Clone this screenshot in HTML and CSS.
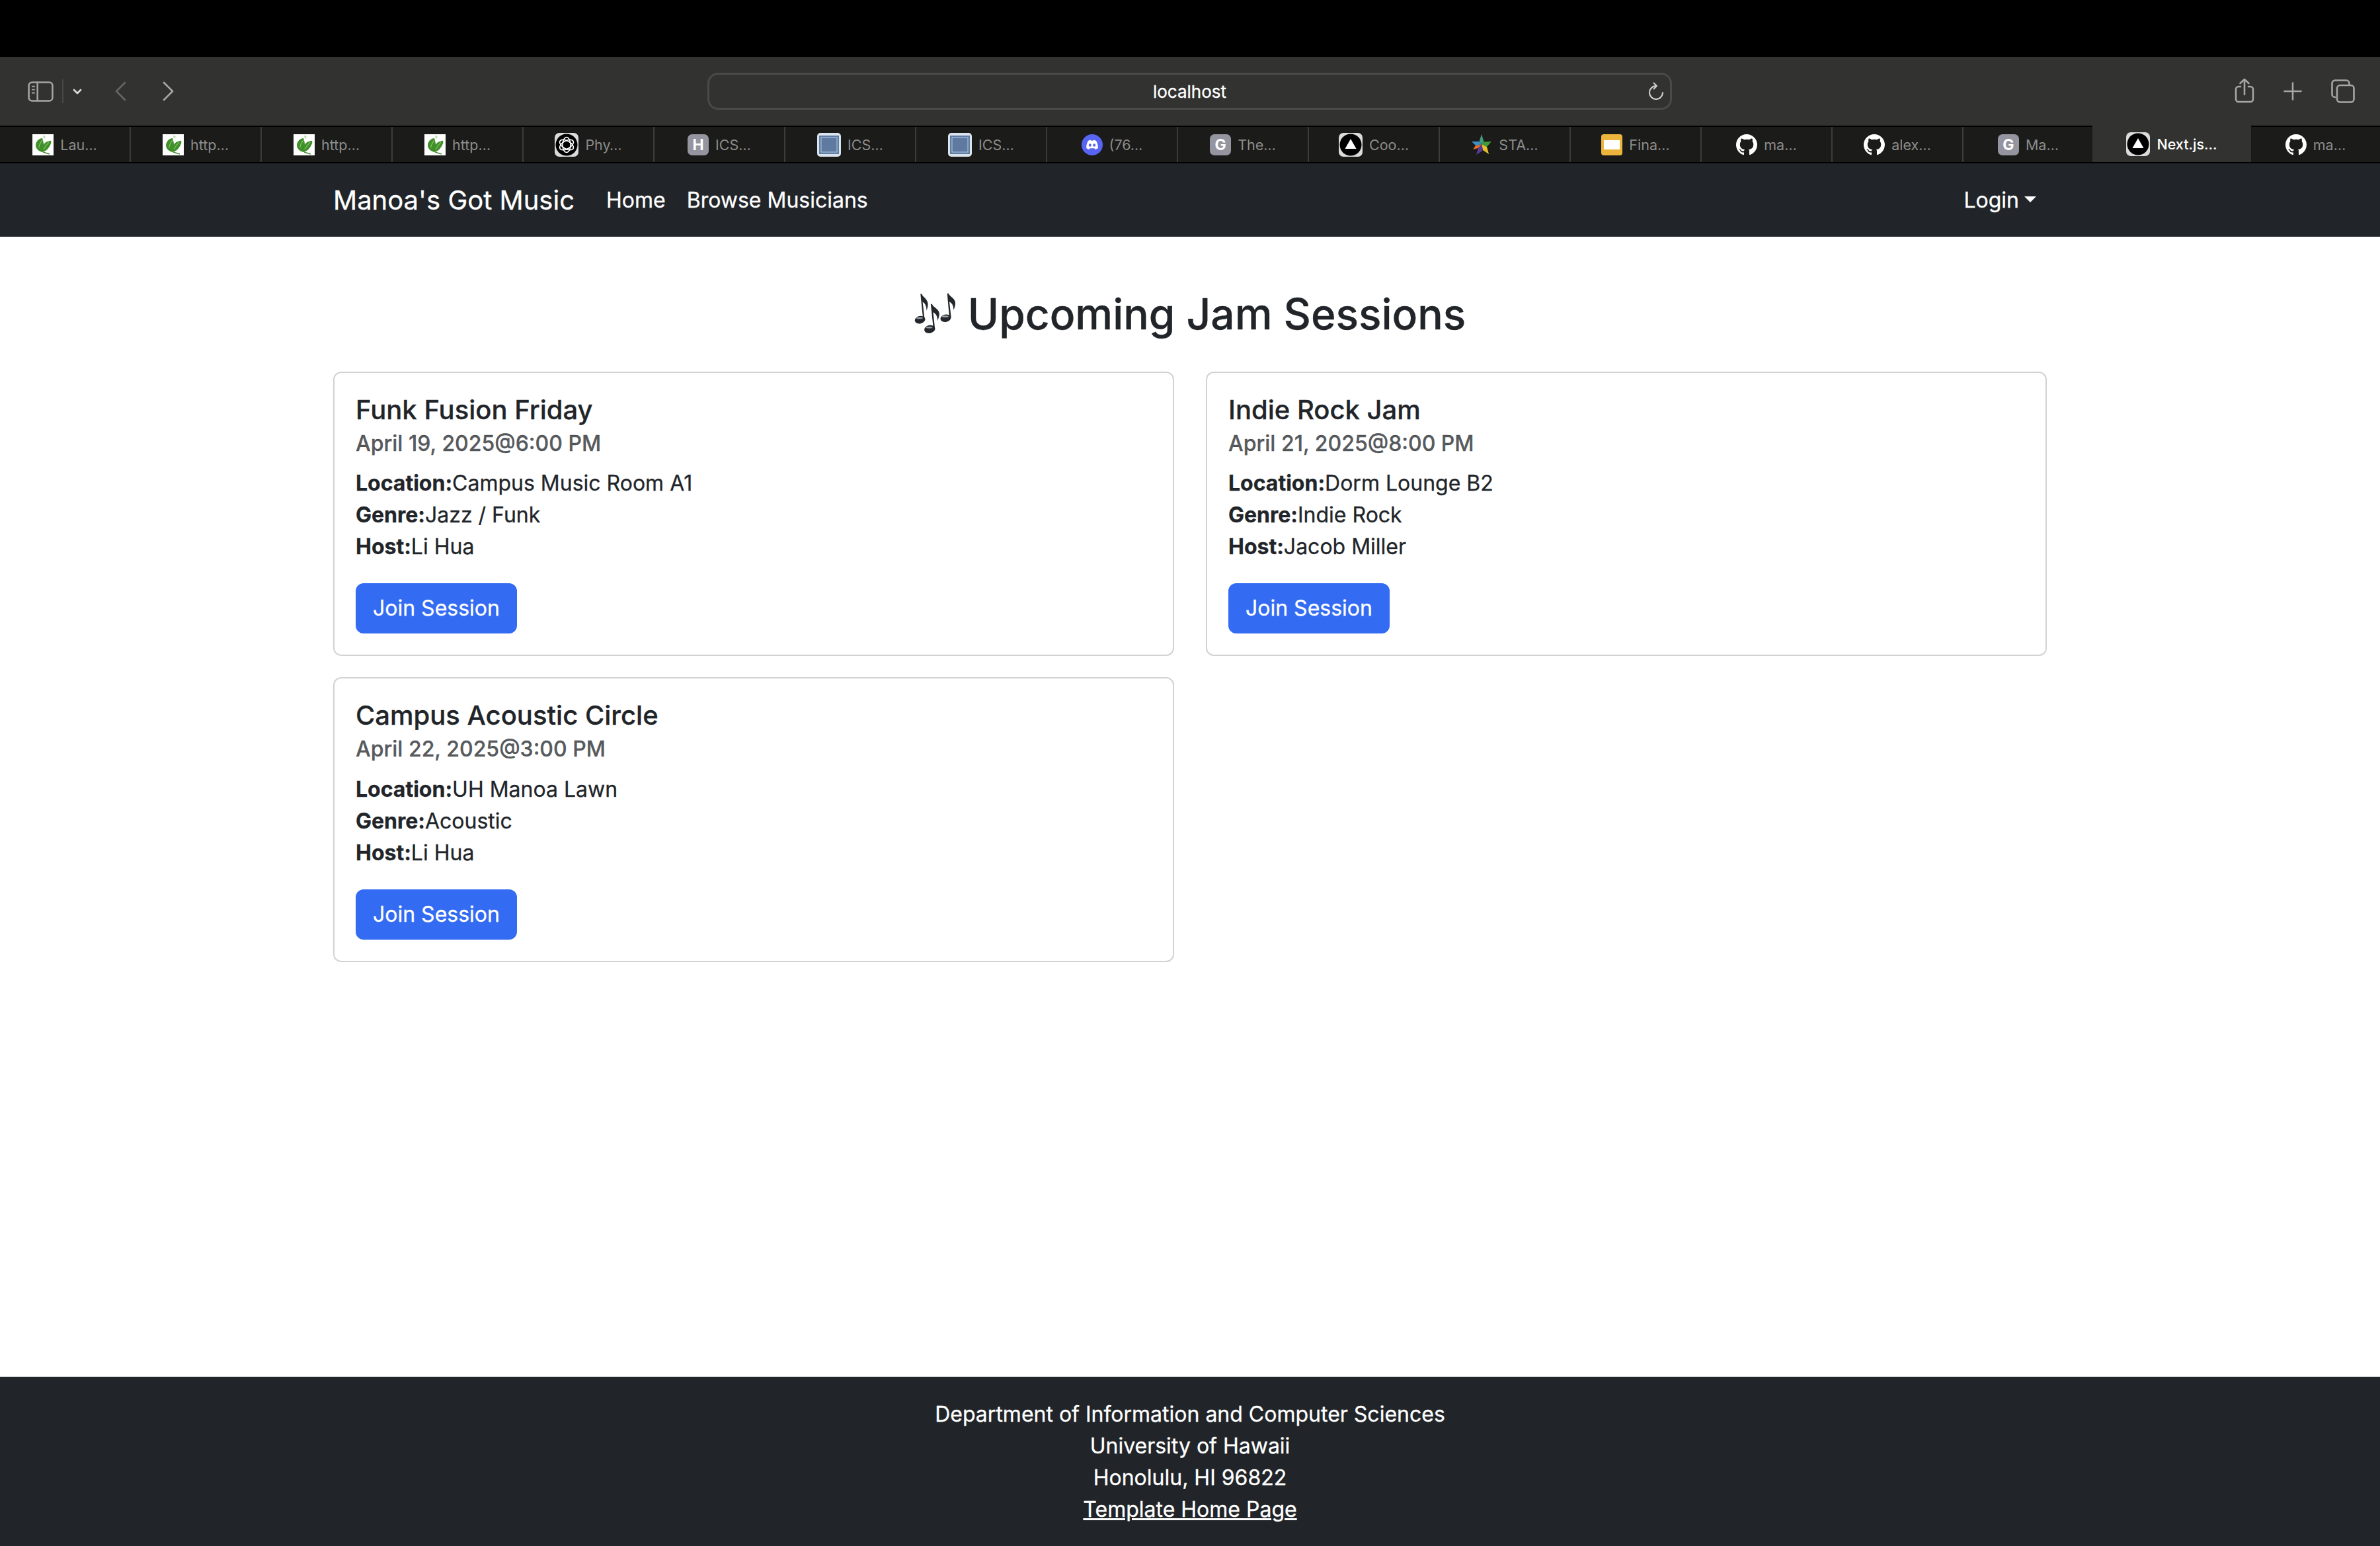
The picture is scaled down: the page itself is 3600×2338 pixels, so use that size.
FILE: index.html
```html
<!DOCTYPE html>
<html lang="en">
<head>
  <meta charset="UTF-8">
  <title>Manoa's Got Music</title>
  <link rel="stylesheet" href="styles.css">
</head>
<body>
  <svg class="sprites" width="0" height="0">
    <symbol id="leaf" viewBox="0 0 32 32">
      <rect width="32" height="32" fill="#fff"/>
      <path d="M17 1l3 3-2 3-2-3z" fill="#bfe0b4"/>
      <path d="M15 6C10 6 5 11 5 17c0 5 5 9 10 10 5-1 10-5 13-13 1-3 0-5-2-4-4 1-8 3-9 6 0-4-1-7-2-10z" fill="#3f8f2a"/>
      <path d="M15 9c-2 3-5 6-5 11M25 12c-3 3-6 7-8 11" fill="none" stroke="#7dbb5f" stroke-width="1.500"/>
      <path d="M16 27l10 3" fill="none" stroke="#4d8a3a" stroke-width="1.500"/>
    </symbol>
    <symbol id="openai" viewBox="0 0 36 36">
      <rect width="36" height="36" rx="7" fill="#dcdcdc"/>
      <circle cx="18" cy="18" r="16.500" fill="#000"/>
      <g fill="none" stroke="#fff" stroke-width="1.600">
        <ellipse cx="18" cy="18" rx="6" ry="11.500"/>
        <ellipse cx="18" cy="18" rx="6" ry="11.500" transform="rotate(60 18 18)"/>
        <ellipse cx="18" cy="18" rx="6" ry="11.500" transform="rotate(120 18 18)"/>
      </g>
    </symbol>
    <symbol id="page" viewBox="0 0 36 36">
      <rect width="36" height="36" rx="5" fill="#dbe3ec"/>
      <rect x="3" y="4" width="30" height="28" fill="#5f7ea6"/>
      <rect x="6" y="7" width="24" height="22" fill="#5e7aa0" stroke="#b9c8da" stroke-width="1"/>
    </symbol>
    <symbol id="discord" viewBox="0 0 32 32">
      <circle cx="16" cy="16" r="16" fill="#5865f2"/>
      <path d="M10 10c2-1 3.500-1.200 4-1.200l.5 1h3l.5-1c.5 0 2 .2 4 1.200 2 3 3 7 2.800 11-1.500 1.200-3 1.800-4.300 2l-1-1.700h-7l-1 1.700c-1.300-.2-2.800-.8-4.300-2-.2-4 .8-8 2.800-11z" fill="#fff"/>
      <ellipse cx="12.800" cy="16.500" rx="2" ry="2.300" fill="#5865f2"/>
      <ellipse cx="19.200" cy="16.500" rx="2" ry="2.300" fill="#5865f2"/>
    </symbol>
    <symbol id="vercel" viewBox="0 0 36 36">
      <rect width="36" height="36" rx="7" fill="#dcdcdc"/>
      <circle cx="18" cy="18" r="16.500" fill="#000"/>
      <path d="M18 9l8.500 15h-17z" fill="#fff"/>
    </symbol>
    <symbol id="star" viewBox="0 0 32 32">
      <path d="M16 0l3.500 11-3.500 4-3.500-4z" fill="#3f9c7b"/>
      <path d="M16 15l3.500-4 1 .5L31 11l-7 8z" fill="#3f9a3a"/>
      <path d="M16 15l8 4 3 11-9-6z" fill="#e6c12e"/>
      <path d="M16 15l2 9-2 2-8 5 3-10z" fill="#5b3a94"/>
      <path d="M16 15l-5 6-8 2 4-6z" fill="#e2702a"/>
      <path d="M16 15l-9 2-6-6h11z" fill="#3d8fc9"/>
    </symbol>
    <symbol id="slides" viewBox="0 0 32 32">
      <rect width="32" height="32" rx="4" fill="#ecb53c"/>
      <rect x="4" y="9" width="24" height="14" fill="#fff"/>
    </symbol>
    <symbol id="github" viewBox="0 0 16 16">
      <path fill="#fff" d="M8 0C3.580 0 0 3.580 0 8c0 3.540 2.290 6.530 5.470 7.590.4.070.55-.17.55-.38 0-.19-.01-.82-.01-1.490-2.010.37-2.530-.49-2.690-.94-.09-.23-.48-.94-.82-1.130-.28-.15-.68-.52-.01-.53.63-.01 1.080.58 1.230.82.72 1.210 1.870.87 2.330.66.07-.52.28-.87.51-1.070-1.780-.2-3.640-.89-3.640-3.950 0-.87.31-1.590.82-2.150-.08-.2-.36-1.020.08-2.120 0 0 .67-.21 2.200.82.64-.18 1.320-.27 2-.27.68 0 1.360.09 2 .27 1.530-1.040 2.200-.82 2.200-.82.44 1.100.16 1.920.08 2.120.51.56.82 1.270.82 2.150 0 3.070-1.870 3.750-3.650 3.950.29.25.54.73.54 1.480 0 1.070-.01 1.930-.01 2.200 0 .21.15.46.55.38A8.013 8.013 0 0016 8c0-4.420-3.580-8-8-8z"/>
    </symbol>
  </svg>

  <header class="toolbar">
    <div class="toolbar-left">
      <svg class="icon-sidebar" viewBox="0 0 40 32" fill="none" stroke="#a6a6a4" stroke-width="2.600">
        <rect x="1.500" y="1.500" width="37" height="29" rx="5"/>
        <path d="M15 1.500v29"/>
        <path d="M6 8h5M6 13h5M6 18h5" stroke-width="2"/>
      </svg>
      <span class="toolbar-divider"></span>
      <svg class="icon-chevron" viewBox="0 0 14 9" fill="none" stroke="#d8d8d6" stroke-width="2.800" stroke-linecap="round" stroke-linejoin="round"><path d="M2 2l5 5 5-5"/></svg>
      <svg class="icon-back" viewBox="0 0 17 30" fill="none" stroke="#666664" stroke-width="2.600" stroke-linecap="round" stroke-linejoin="round"><path d="M15 2L2 15l13 13"/></svg>
      <svg class="icon-forward" viewBox="0 0 17 30" fill="none" stroke="#aaaaa8" stroke-width="2.600" stroke-linecap="round" stroke-linejoin="round"><path d="M2 2l13 13L2 28"/></svg>
    </div>
    <div class="address-bar">
      <span class="address-text">localhost</span>
      <svg class="icon-reload" viewBox="0 0 24 28" fill="none" stroke="#d0d0ce" stroke-width="2" stroke-linecap="round" stroke-linejoin="round"><path d="M12 6a10 10 0 1 0 10 10"/><path d="M8.500 1.500L13 6l-4.500 4.500"/></svg>
    </div>
    <div class="toolbar-right">
      <svg class="icon-share" viewBox="0 0 30 38" fill="none" stroke="#a6a6a4" stroke-width="2.600" stroke-linecap="round" stroke-linejoin="round"><path d="M9 13H6a4 4 0 0 0-4 4v15a4 4 0 0 0 4 4h18a4 4 0 0 0 4-4V17a4 4 0 0 0-4-4h-3"/><path d="M15 25V2M8.500 8L15 2l6.500 6"/></svg>
      <svg class="icon-plus" viewBox="0 0 28 28" fill="none" stroke="#a6a6a4" stroke-width="2.600" stroke-linecap="round"><path d="M14 1.500v25M1.500 14h25"/></svg>
      <svg class="icon-tabs" viewBox="0 0 36 36" fill="none" stroke="#a6a6a4" stroke-width="2.600"><path d="M7 27H6a4.500 4.500 0 0 1-4.500-4.500V6A4.500 4.500 0 0 1 6 1.500h17A4.500 4.500 0 0 1 27.500 6v2"/><rect x="9" y="9" width="25.500" height="25.500" rx="4.500"/></svg>
    </div>
  </header>

  <div class="tab-bar">
    <div class="tab"><svg class="favicon"><use href="#leaf"/></svg><span>Lau…</span></div>
    <div class="tab"><svg class="favicon"><use href="#leaf"/></svg><span>http…</span></div>
    <div class="tab"><svg class="favicon"><use href="#leaf"/></svg><span>http…</span></div>
    <div class="tab"><svg class="favicon"><use href="#leaf"/></svg><span>http…</span></div>
    <div class="tab"><svg class="favicon-big"><use href="#openai"/></svg><span>Phy…</span></div>
    <div class="tab"><span class="letter-icon">H</span><span>ICS…</span></div>
    <div class="tab"><svg class="favicon-big"><use href="#page"/></svg><span>ICS…</span></div>
    <div class="tab"><svg class="favicon-big"><use href="#page"/></svg><span>ICS…</span></div>
    <div class="tab"><svg class="favicon"><use href="#discord"/></svg><span>(76…</span></div>
    <div class="tab"><span class="letter-icon">G</span><span>The…</span></div>
    <div class="tab"><svg class="favicon-big"><use href="#vercel"/></svg><span>Coo…</span></div>
    <div class="tab"><svg class="favicon"><use href="#star"/></svg><span>STA…</span></div>
    <div class="tab"><svg class="favicon"><use href="#slides"/></svg><span>Fina…</span></div>
    <div class="tab"><svg class="favicon"><use href="#github"/></svg><span>ma…</span></div>
    <div class="tab"><svg class="favicon"><use href="#github"/></svg><span>alex…</span></div>
    <div class="tab"><span class="letter-icon">G</span><span>Ma…</span></div>
    <div class="tab tab-active"><svg class="favicon-big"><use href="#vercel"/></svg><span>Next.js…</span></div>
    <div class="tab tab-last"><svg class="favicon"><use href="#github"/></svg><span>ma…</span></div>
  </div>

  <nav class="navbar">
    <div class="nav-inner">
      <a class="brand">Manoa's Got Music</a>
      <a class="nav-link">Home</a>
      <a class="nav-link">Browse Musicians</a>
      <a class="nav-link nav-login">Login<span class="caret"></span></a>
    </div>
  </nav>

  <main class="page">
    <h1 class="page-title">
      <svg class="notes" viewBox="40 65 190 195">
        <g fill="#23272b">
          <ellipse cx="66" cy="190" rx="24" ry="17" transform="rotate(-12 66 190)"/>
          <path d="M80 188L68 72l6 0c4 14 26 22 28 44 1 12-3 24-6 32 0-20-6-32-18-40l9 80z"/>
          <ellipse cx="110" cy="233" rx="25" ry="18" transform="rotate(-12 110 233)"/>
          <path d="M127 230L115 118l6 0c4 14 30 22 33 42 1 12-4 24-8 34 0-20-8-32-20-38l8 74z"/>
          <ellipse cx="183" cy="183" rx="24" ry="17" transform="rotate(-12 183 183)"/>
          <path d="M200 180L190 70l6 0c4 14 28 20 31 42 1 12-4 24-8 34 0-20-6-32-19-38l8 72z"/>
        </g>
        <g fill="#9aa1a8">
          <ellipse cx="64" cy="182" rx="15" ry="4"/>
          <ellipse cx="108" cy="225" rx="15" ry="4"/>
          <ellipse cx="181" cy="175" rx="15" ry="4"/>
        </g>
      </svg>
      <span>Upcoming Jam Sessions</span>
    </h1>

    <div class="card-grid">
      <section class="card">
        <h5 class="card-title">Funk Fusion Friday</h5>
        <h6 class="card-subtitle">April 19, 2025@6:00 PM</h6>
        <p class="card-line"><strong>Location:</strong>Campus Music Room A1</p>
        <p class="card-line"><strong>Genre:</strong>Jazz / Funk</p>
        <p class="card-line"><strong>Host:</strong>Li Hua</p>
        <button class="btn-join">Join Session</button>
      </section>
      <section class="card">
        <h5 class="card-title">Indie Rock Jam</h5>
        <h6 class="card-subtitle">April 21, 2025@8:00 PM</h6>
        <p class="card-line"><strong>Location:</strong>Dorm Lounge B2</p>
        <p class="card-line"><strong>Genre:</strong>Indie Rock</p>
        <p class="card-line"><strong>Host:</strong>Jacob Miller</p>
        <button class="btn-join">Join Session</button>
      </section>
      <section class="card">
        <h5 class="card-title">Campus Acoustic Circle</h5>
        <h6 class="card-subtitle">April 22, 2025@3:00 PM</h6>
        <p class="card-line"><strong>Location:</strong>UH Manoa Lawn</p>
        <p class="card-line"><strong>Genre:</strong>Acoustic</p>
        <p class="card-line"><strong>Host:</strong>Li Hua</p>
        <button class="btn-join">Join Session</button>
      </section>
    </div>
  </main>

  <footer class="footer">
    <div>Department of Information and Computer Sciences</div>
    <div>University of Hawaii</div>
    <div>Honolulu, HI 96822</div>
    <a class="footer-link">Template Home Page</a>
  </footer>
</body>
</html>
```

FILE: styles.css
```css
html, body { margin: 0; height: 100%; }
body { display: flex; flex-direction: column; min-height: 2338px; font-family: Inter, "Noto Sans", sans-serif; font-size: 32px; line-height: 48px; color: #212529; background: #fff; border-top: 86px solid #000; box-sizing: border-box; -webkit-text-stroke: .3px; }
.sprites { position: absolute; }
svg { display: block; flex: none; }

/* browser chrome */
.toolbar { display: grid; grid-template-columns: 1070px 1459px 1fr; align-items: center; height: 104px; background: #323230; }
.toolbar-left { display: flex; align-items: center; padding-left: 42px; }
.icon-sidebar { width: 39px; height: 31px; }
.toolbar-divider { width: 2px; height: 36px; margin-left: 13px; background: #484846; }
.icon-chevron { width: 14px; height: 9px; margin-left: 14px; }
.icon-back { width: 17px; height: 30px; margin-left: 50px; }
.icon-forward { width: 17px; height: 30px; margin-left: 55px; }
.address-bar { display: grid; grid-template-columns: 1fr auto 1fr; align-items: center; height: 56px; padding: 0 9px; box-sizing: border-box; border: 3px solid #4a4a48; border-radius: 16px; }
.address-text { grid-column: 2; padding-top: 1px; font-size: 26px; line-height: 32px; color: #fff; }
.icon-reload { grid-column: 3; justify-self: end; width: 24px; height: 28px; }
.toolbar-right { display: flex; align-items: center; padding-left: 851px; }
.icon-share { width: 30px; height: 38px; margin-top: -3px; }
.icon-plus { width: 28px; height: 28px; margin-left: 44px; }
.icon-tabs { width: 36px; height: 36px; margin-left: 44px; }

.tab-bar { display: flex; height: 57px; box-sizing: border-box; border-top: 2px solid #000; border-bottom: 2px solid #000; background: #1b1b1a; }
.tab { display: flex; align-items: center; justify-content: center; gap: 10px; width: 198px; flex: none; box-sizing: border-box; border-right: 2px solid #3c3c3a; font-size: 21.5px; line-height: 24px; color: #8c8c8a; -webkit-text-stroke: 0; }
.tab-active { width: 240px; margin: -2px 0 0 -3px; background: #323230; color: #fff; border-right: 0; font-weight: 500; }
.tab-last { flex: 1; width: auto; border-right: 0; }
.favicon { width: 32px; height: 32px; }
.favicon-big { width: 36px; height: 36px; }
.letter-icon { width: 32px; height: 32px; border-radius: 7px; background: #95959f; color: #fff; font-size: 23px; line-height: 32px; font-weight: 700; text-align: center; }

/* site navbar */
.navbar { background: #212529; height: 111px; display: flex; align-items: center; }
.nav-inner { display: flex; align-items: center; width: 2592px; margin: 0 auto; }
.brand { font-size: 40px; line-height: 60px; color: #fff; margin-right: 32px; }
.nav-link { padding: 0 16px; color: #fff; }
.nav-login { margin-left: auto; display: flex; align-items: center; }
.caret { width: 0; height: 0; margin-left: 8px; margin-bottom: 2px; border-top: 9.6px solid #fff; border-left: 9.6px solid transparent; border-right: 9.6px solid transparent; }

/* sessions */
.page { flex: 1; width: 2592px; margin: 0 auto; padding-top: 78px; }
.page-title { display: flex; justify-content: center; align-items: center; gap: 18px; margin: 0 0 49px; font-size: 64px; line-height: 77px; font-weight: 500; }
.notes { width: 63px; height: 65px; }
.card-grid { display: grid; grid-template-columns: 1fr 1fr; gap: 32px 48px; align-items: start; }
.card { padding: 32px; border: 2px solid rgba(0,0,0,.175); border-radius: 12px; }
.card-title { margin: 0 0 8px; font-size: 40px; line-height: 48px; font-weight: 500; }
.card-subtitle { margin: 0 0 17px; font-size: 32px; line-height: 38.4px; font-weight: 500; color: rgba(33,37,41,.75); }
.card-line { margin: 0; }
.card-line strong { font-weight: 700; }
.btn-join { display: block; margin-top: 31px; padding: 12px 24px; border: 2px solid #336cf3; border-radius: 12px; background: #336cf3; color: #fff; font: inherit; }

.footer { height: 256px; padding: 33px 0 0; box-sizing: border-box; background: #212529; color: #fff; text-align: center; }
.footer-link { color: #fff; text-decoration: underline; }
```
